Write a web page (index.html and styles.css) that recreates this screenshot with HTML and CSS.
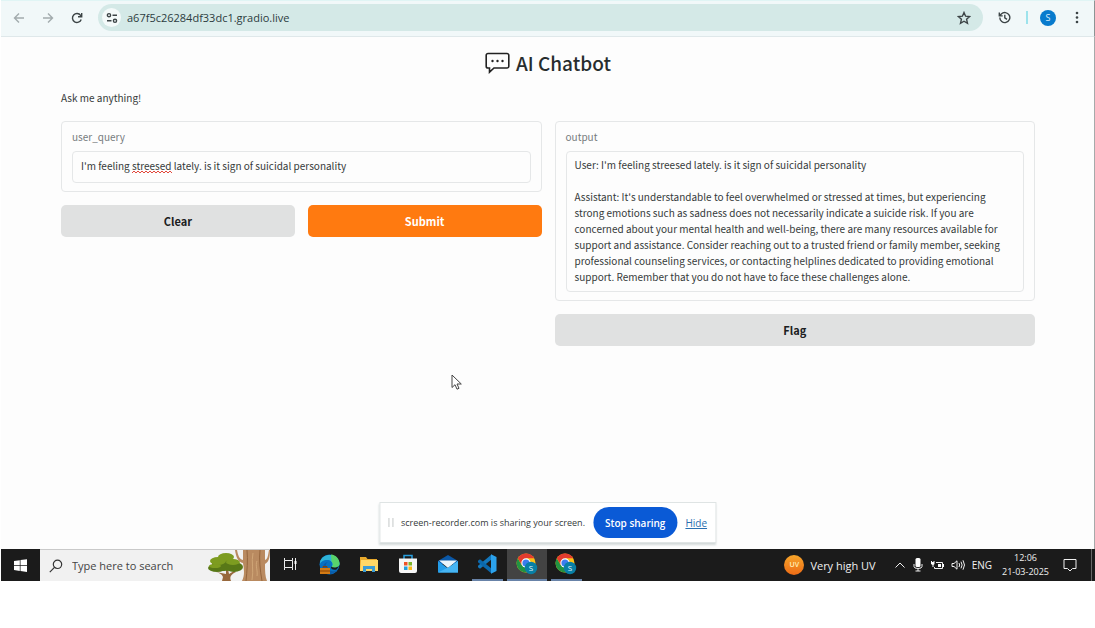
FILE: index.html
```html
<!DOCTYPE html>
<html lang="en">
<head>
<meta charset="utf-8">
<title>AI Chatbot</title>
<link rel="stylesheet" href="styles.css">
</head>
<body>
<svg class="defs" aria-hidden="true">
  <symbol id="chrome" viewBox="0 0 22 22">
    <circle cx="10" cy="10" r="9.500" fill="#fbc116"/>
    <path d="M1.800 5.200A9.500 9.500 0 0 0 9.500 19.500L14 12.300 10 10 5.800 12.200Z" fill="#229342"/>
    <path d="M1.800 5.200 5.900 12 10 10V5.300h8.300A9.500 9.500 0 0 0 1.800 5.200" fill="#e33b2e"/>
    <circle cx="10" cy="10" r="4.700" fill="#fff"/>
    <circle cx="10" cy="10" r="3.600" fill="#3b7ded"/>
    <circle cx="15" cy="15" r="6.200" fill="#087fa5"/>
  </symbol>
</svg>
<div class="screen">
  <header class="toolbar">
    <button class="nav faded" aria-label="Back"><svg width="12" height="12" viewBox="0 0 12 12"><path d="M11 6H1.500M6 1.500 1.500 6 6 10.500"/></svg></button>
    <button class="nav faded" aria-label="Forward"><svg width="12" height="12" viewBox="0 0 12 12"><path d="M1 6h9.500M6 1.500 10.500 6 6 10.500"/></svg></button>
    <button class="nav" aria-label="Reload"><svg width="12" height="12" viewBox="0 0 12 12"><path d="M10.200 7.500A4.500 4.500 0 1 1 9.600 3.300L10.500 4.500M10.700 1v3.700H7"/></svg></button>
    <div class="address">
      <button class="site" aria-label="Site information"><svg width="12" height="12" viewBox="0 0 12 12"><circle cx="3" cy="3.200" r="1.600"/><path d="M6.500 3.200H11M1 8.800h4.500"/><circle cx="9" cy="8.800" r="1.600"/></svg></button>
      <input class="url" type="text" aria-label="Address" value="a67f5c26284df33dc1.gradio.live">
      <button class="star" aria-label="Bookmark"><svg width="14" height="14" viewBox="0 0 14 14"><path d="m7 1.500 1.600 3.700 4 .4-3 2.700.9 4L7 10.200l-3.500 2.100.9-4-3-2.700 4-.4Z"/></svg></button>
    </div>
    <button class="nav" aria-label="History"><svg width="13" height="13" viewBox="0 0 13 13"><path d="M1.800 6.500A5 5 0 1 0 3.300 3L1.500 4.700M1.300 1.500v3.400h3.400M6.800 3.800v3l2.200 1.500"/></svg></button>
    <span class="divider"></span>
    <button class="avatar" aria-label="Profile">S</button>
    <button class="menu" aria-label="Menu"><svg width="4" height="13" viewBox="0 0 4 13"><circle cx="2" cy="2" r="1.300"/><circle cx="2" cy="6.500" r="1.300"/><circle cx="2" cy="11" r="1.300"/></svg></button>
  </header>

  <main class="page">
    <h1 class="title"><svg width="25" height="22" viewBox="0 0 25 22"><path d="M3 1.500h19a1.800 1.800 0 0 1 1.800 1.800v10.900A1.800 1.800 0 0 1 22 16H9l-4.500 4.200V16H3a1.800 1.800 0 0 1-1.800-1.800V3.300A1.800 1.800 0 0 1 3 1.500Z"/><g class="dots"><circle cx="7.500" cy="9" r="1.200"/><circle cx="12.500" cy="9" r="1.200"/><circle cx="17.500" cy="9" r="1.200"/></g></svg><span>AI Chatbot</span></h1>
    <p class="lead">Ask me anything!</p>
    <div class="columns">
      <section class="column">
        <div class="card">
          <label class="label" for="query">user_query</label>
          <div class="field-wrap">
            <input class="field" id="query" type="text" spellcheck="false" value="I'm feeling streesed lately. is it sign of suicidal personality">
            <svg class="squiggle" width="40" height="4" viewBox="0 0 40 4"><path d="M0 3 2 1l2 2 2-2 2 2 2-2 2 2 2-2 2 2 2-2 2 2 2-2 2 2 2-2 2 2 2-2 2 2 2-2 2 2 2-2 2 2"/></svg>
          </div>
        </div>
        <div class="actions">
          <button class="btn">Clear</button>
          <button class="btn primary">Submit</button>
        </div>
      </section>
      <section class="column">
        <div class="card">
          <label class="label" for="output">output</label>
          <textarea class="field output" id="output" rows="8" spellcheck="false" readonly>User: I'm feeling streesed lately. is it sign of suicidal personality

Assistant: It's understandable to feel overwhelmed or stressed at times, but experiencing strong emotions such as sadness does not necessarily indicate a suicide risk. If you are concerned about your mental health and well-being, there are many resources available for support and assistance. Consider reaching out to a trusted friend or family member, seeking professional counseling services, or contacting helplines dedicated to providing emotional support. Remember that you do not have to face these challenges alone.</textarea>
        </div>
        <button class="btn">Flag</button>
      </section>
    </div>
    <svg class="cursor" width="12" height="17" viewBox="0 0 12 17"><path d="M1 1v12.500l3-2.800 2 4.500 2-.9-2-4.300h4.300Z"/></svg>
    <aside class="share">
      <span class="grip"></span>
      <span class="share-text">screen-recorder.com is sharing your screen.</span>
      <button class="stop">Stop sharing</button>
      <a class="hide" href="#">Hide</a>
    </aside>
  </main>

  <footer class="taskbar">
    <button class="start" aria-label="Start"><svg width="13" height="13" viewBox="0 0 13 13"><path d="M0 2 5.800 1.200v5H0ZM6.500 1.100 13 .2v6H6.500ZM0 6.900h5.800v5L0 11.100ZM6.500 6.900H13v6l-6.500-.9Z" fill="#fff"/></svg></button>
    <div class="search">
      <svg width="14" height="14" viewBox="0 0 14 14"><g fill="none" stroke="#333" stroke-width="1.200"><circle cx="8.500" cy="5.300" r="4.200"/><path d="M5.500 8.400.8 13.200"/></g></svg>
      <input class="search-input" type="text" aria-label="Search" placeholder="Type here to search">
      <svg class="trees" width="63" height="31" viewBox="0 0 63 31">
        <path d="M9 22c3 1 6 2 7 5l-1 4h9c-2-5 1-7 5-9l-2-1-5 3-1-5h-2v5Z" fill="#98683c"/>
        <g fill="#587817"><ellipse cx="10" cy="18" rx="9" ry="4"/><ellipse cx="27" cy="17" rx="9" ry="5"/><ellipse cx="17" cy="14" rx="12" ry="7"/></g>
        <g fill="#7d9c20"><ellipse cx="19" cy="7" rx="8" ry="4"/><ellipse cx="11" cy="11" rx="8" ry="4"/><ellipse cx="26" cy="12" rx="7" ry="3"/><ellipse cx="8" cy="16" rx="6" ry="2"/></g>
        <path d="M28 0h2c1 5 2 9 6 10V0h22v10c3-1 3-5 4-10h1c0 7-1 12-5 14 0 7 0 12 2 17H35c3-6 2-12 1-18-5-1-7-6-8-13Z" fill="#b98a60"/>
        <g fill="none" stroke="#94653d"><path d="M40 0c1 10 0 21-1 31M53 0c-1 9 0 20 2 31"/><path d="M46 3c-2 9 1 17-1 27M50 11c-2 4 1 10 0 15" stroke="#d0a677"/></g>
      </svg>
    </div>
    <nav class="apps">
      <button class="app" aria-label="Task view"><svg width="14" height="14" viewBox="0 0 14 14"><g fill="none" stroke="#eee"><path d="M1.500 1v2.500h8V1M1.500 13v-2.500h8V13M1.500 3.500v7M9.500 3.500v7M12.500 1v12"/></g><path d="M11.500 4h2v3h-2z" fill="#fff"/></svg></button>
      <button class="app" aria-label="Edge"><svg width="21" height="21" viewBox="0 0 21 21"><circle cx="10.500" cy="10.500" r="10" fill="#0871c2"/><path d="M1 8C3-1 18-2 20.500 9c.5 5-5 6-8 4 3-3 0-7-4-7-4-.2-7 2-7.500 4Z" fill="#2eb4d8"/><path d="M12 .6c5 .4 8.500 4.400 8.500 8.900 0 4-5 5-8 3.500 2-2 1.500-4 0-5.500Z" fill="#58d36c"/><path d="M7 11c0 5 6 8 11 5-3 5-10 5-13 1-2-4-1-8 4-9-1 1-2 1-2 3Z" fill="#0a5cab"/><path d="M12 12.500c2 1.500 6 1.500 8.500-1l-3 4c-3 1-6-.5-5.500-3Z" fill="#1b1b1b"/><path d="M1 14h10v6H1z" fill="#d47b14"/><path d="M4 14v-1.500h4V14M1 17h10" fill="none" stroke="#884304"/></svg></button>
      <button class="app" aria-label="File Explorer"><svg width="18" height="17" viewBox="0 0 18 17"><path d="M0 1h6l1.500 2H17v12H0Z" fill="#e8a92c"/><path d="M1 4h17v11H0Z" fill="#ffd766"/><path d="M3 16v-6h12v6h-3v-3H6v3Z" fill="#3a9bd4"/></svg></button>
      <button class="app" aria-label="Store"><svg width="20" height="20" viewBox="0 0 20 20"><path d="M6 5V1.500h8V5" fill="none" stroke="#29a0df" stroke-width="1.500"/><path d="M1 4.500h18V17a2 2 0 0 1-2 2H3a2 2 0 0 1-2-2Z" fill="#f6f6f6"/><path d="M6 8h3.500v3.500H6z" fill="#ef5226"/><path d="M10.500 8H14v3.500h-3.500z" fill="#7db52a"/><path d="M6 12.500h3.500V16H6z" fill="#229fdd"/><path d="M10.500 12.500H14V16h-3.500z" fill="#fbb817"/></svg></button>
      <button class="app" aria-label="Mail"><svg width="20" height="18" viewBox="0 0 20 18"><path d="M0 6 10 0l10 6v3H0Z" fill="#0b58a7"/><path d="M1 5.500h18L10 13Z" fill="#eaf5fc"/><path d="M0 6l10 7.500L20 6v11.500H0Z" fill="#239de9"/><path d="M0 17.500 11 12l9-6v11.500Z" fill="#46b5f4"/></svg></button>
      <button class="app open" aria-label="Code editor"><svg width="20" height="20" viewBox="0 0 20 20"><path d="M14.500.5v5L3 14.700 1 13.200v-1.500Z" fill="#1377bc"/><path d="M1 8.300v-1.500l2-1.500 11.500 9.200v5Z" fill="#0b68ad"/><path d="M14 .3 19.500 3v14L14 19.700Z" fill="#2ba2ed"/></svg></button>
      <button class="app open active" aria-label="Chrome window 1"><svg width="22" height="22" viewBox="0 0 22 22"><use href="#chrome"/><text x="15" y="18" text-anchor="middle" class="badge-letter">S</text></svg></button>
      <button class="app open" aria-label="Chrome window 2"><svg width="22" height="22" viewBox="0 0 22 22"><use href="#chrome"/><text x="15" y="18" text-anchor="middle" class="badge-letter">S</text></svg></button>
    </nav>
    <div class="tray">
      <button class="weather"><span class="uv">UV</span>Very high UV</button>
      <svg width="12" height="12" viewBox="0 0 12 12"><path d="m1.500 8.500 4.500-4.500 4.500 4.500" class="line"/></svg>
      <svg width="10" height="14" viewBox="0 0 10 14"><rect x="2.500" y="0" width="5" height="9" rx="1.500" fill="#fff"/><path d="M1 6v2.500Q1 10.500 5 10.500t4-2V6M5 10.500V13M2.500 13h5" class="line"/></svg>
      <svg width="14" height="12" viewBox="0 0 14 12"><path d="M6 3.500h6.500v6h-8V8" class="line"/><path d="M1 2h1v1h1.500V2h1v3L3.500 6v2h-1V6L1 5ZM8 5h3v3H8zM13 5h1v3h-1z" fill="#fff"/></svg>
      <svg width="14" height="12" viewBox="0 0 14 12"><path d="M1 4.500h2l3-2.700v8.400l-3-2.700H1ZM8 4q1.300 2 0 4M10 2.700q2.200 3.300 0 6.600M12 1.300q3 4.700 0 9.400" class="line"/></svg>
      <span class="lang">ENG</span>
      <time class="clock" datetime="2025-03-21T12:06"><span>12:06</span><span>21-03-2025</span></time>
      <svg width="14" height="14" viewBox="0 0 14 14"><path d="M1 1.500h12v9H9.500L7 13l-2.500-2.500H1Z" class="line"/></svg>
      <span class="edge"></span>
    </div>
  </footer>
</div>
</body>
</html>
```
FILE: styles.css
```css
* { box-sizing: border-box; }
body {
  margin: 0;
  min-height: 100vh;
  padding: 0 0 47px 1px;
  display: flex;
  background: #fff;
  font-family: "Noto Sans CJK SC", "Noto Sans", sans-serif;
  color: #353a3a;
}
button, input, textarea { font-family: inherit; margin: 0; }
button { padding: 0; border: 0; background: none; color: inherit; display: flex; align-items: center; justify-content: center; }
svg { flex: none; display: block; }
.defs { position: absolute; width: 0; height: 0; }
.badge-letter { font: 8px "Open Sans", sans-serif; fill: #e4f5fa; }
.screen { flex: 1; min-width: 0; display: flex; flex-direction: column; background: #fdfdfd; }

/* Browser toolbar */
.toolbar {
  height: 37px;
  padding: 0 15px 2px 11px;
  display: flex;
  align-items: center;
  background: #f1f8f9;
  border-top: 1px solid #e0f5f5;
  border-bottom: 1px solid #dfe8ea;
  border-right: 1px solid #8c9494;
  font-family: "Open Sans", "Noto Sans", sans-serif;
}
.toolbar svg { fill: none; stroke: #3c4446; stroke-width: 1.400; }
.toolbar .faded svg { stroke: #a2abad; }
.nav { width: 13px; height: 24px; margin-right: 16px; }
.address {
  flex: 1;
  height: 27px;
  margin-right: 15px;
  margin-left: -1px;
  padding: 0 12px 0 4px;
  display: flex;
  align-items: center;
  border-radius: 14px;
  background: #d4e9e7;
}
.site { width: 19px; height: 19px; border-radius: 50%; background: #f4fafa; }
.url { flex: 1; min-width: 0; margin-left: 6px; padding: 0; border: 0; background: none; font-size: 11px; line-height: 16px; color: #2c3c40; }
.divider { width: 2px; height: 13px; margin-left: -1px; background: #9de3ec; }
.avatar { width: 16px; height: 16px; margin: 0 19px 0 12px; border-radius: 50%; background: #087bcd; color: #dceefb; font-size: 9px; }
.toolbar .menu svg { fill: #3c4446; stroke: none; }

/* Page */
.page { position: relative; flex: 1; padding: 10px 59px 0 60px; border-right: 1px solid #a6aaaa; }
.title { margin: 0; display: flex; justify-content: center; align-items: center; gap: 6px; font-size: 19px; line-height: 32px; font-weight: 500; color: #282d2e; }
.title svg { fill: none; stroke: #222; stroke-width: 1.600; }
.title .dots { fill: #222; stroke: none; }
.lead { margin: 11px 0 15px; font-size: 10px; line-height: 16px; }
.columns { display: flex; gap: 13px; align-items: flex-start; }
.column { flex: 1; min-width: 0; display: flex; flex-direction: column; gap: 13px; }
.card { padding: 7px 10px 8px; border: 1px solid #e5e7e8; border-radius: 4px; }
.label { display: block; margin-bottom: 6px; font-size: 10px; line-height: 16px; color: #777c7d; }
.field-wrap { position: relative; }
.field {
  display: block;
  width: 100%;
  height: 32px;
  padding: 0 8px 4px;
  border: 1px solid #e5e7e8;
  border-radius: 4px;
  background: #fdfdfd;
  font-size: 10px;
  line-height: 16px;
  color: #353a3a;
}
.output { height: auto; padding: 5px 8px 6px; resize: none; overflow: hidden; }
.squiggle { position: absolute; left: 60px; top: 19px; fill: none; stroke: #e2483c; stroke-width: 1; }
.actions { display: flex; gap: 13px; }
.btn { flex: 1 0 auto; min-height: 32px; border-radius: 5px; background: #e0e1e1; font-size: 11px; line-height: 16px; font-weight: 700; color: #1b2021; }
.actions .btn { flex-basis: 0; }
.actions .primary { background: #ff7a10; color: #fff; }
.cursor { position: absolute; left: 450px; top: 337px; fill: #fff; stroke: #444; }

/* Screen share notice */
.share {
  position: absolute;
  left: 50%;
  bottom: 6px;
  transform: translateX(-50%);
  height: 41px;
  padding: 0 8px;
  display: flex;
  align-items: center;
  white-space: nowrap;
  background: #fff;
  border: 1px solid #dfe4e4;
  box-shadow: 0 2px 2px #d3d9d9;
  font-family: "Open Sans", "Noto Sans", sans-serif;
  font-size: 9px;
}
.grip { width: 5px; height: 9px; margin-right: 8px; border: solid #c5c9c9; border-width: 0 1px; }
.stop { height: 31px; margin: 0 8px; padding: 0 12px; border-radius: 16px; background: #0a5ad6; color: #fff; font-size: 10px; font-weight: 600; }
.hide { color: #2a6fb0; font-size: 10px; }

/* Taskbar */
.taskbar { height: 32px; display: flex; background: #1b1b1b; color: #f0f0f0; font-family: "Open Sans", "Noto Sans", sans-serif; }
.start { width: 39px; }
.search { flex: 0 1 230px; min-width: 0; padding-left: 9px; display: flex; align-items: center; background: #f1f1f1; border-top: 1px solid #c9c9c9; }
.search-input { flex: 1; min-width: 0; margin-left: 9px; padding: 0; border: 0; background: none; font-size: 11px; color: #444; }
.search-input::placeholder { color: #444; opacity: 1; }
.apps { flex: 0 1 316px; display: grid; grid-template-columns: repeat(8, 1fr); }
.app { border-bottom: 2px solid transparent; }
.open { margin: 0 4px; border-color: #6883a8; }
.active { margin: 0; background: #434343; }
.tray { margin-left: auto; display: flex; align-items: center; gap: 7px; font-size: 11px; line-height: 14px; white-space: nowrap; }
.weather { gap: 6px; margin-right: 11px; font-size: 11px; }
.uv { width: 20px; height: 20px; border-radius: 50%; background: linear-gradient(#f6a52a, #ed6b16); font-size: 7px; line-height: 20px; font-weight: 600; color: #fff0b8; }
.line { fill: none; stroke: #f0f0f0; stroke-width: 1; }
.lang { font-size: 10px; }
.clock { display: flex; flex-direction: column; align-items: center; margin: 0 7px 0 3px; font-size: 9px; }
.edge { width: 1px; height: 32px; margin: 0 3px 0 7px; background: #666; }
```
